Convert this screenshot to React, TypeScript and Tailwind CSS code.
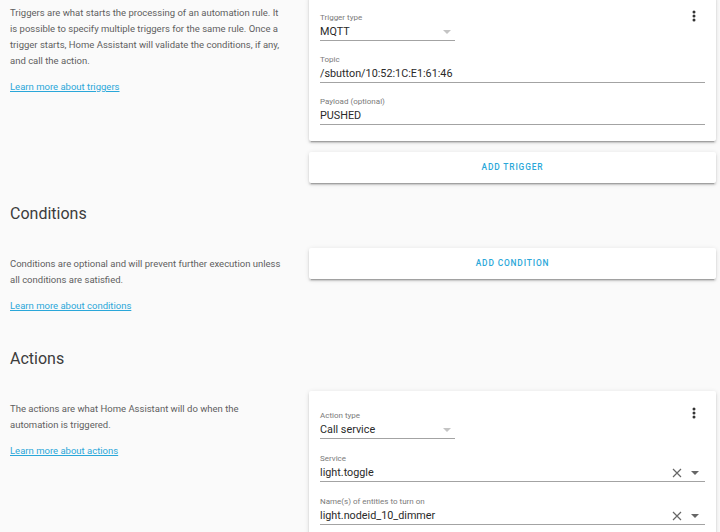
import React from "react";

const cardShadow =
  "shadow-[0_2px_2px_0_rgba(0,0,0,0.14),0_1px_5px_0_rgba(0,0,0,0.12),0_3px_1px_-2px_rgba(0,0,0,0.2)]";

function Dots({ className }: { className: string }) {
  return (
    <svg width="4" height="12" viewBox="0 0 4 12" className={"absolute right-[20px] " + className}>
      <circle cx="2" cy="2" r="1.5" fill="#333" />
      <circle cx="2" cy="6" r="1.5" fill="#333" />
      <circle cx="2" cy="10" r="1.5" fill="#333" />
    </svg>
  );
}

function Caret({ color }: { color: string }) {
  return (
    <svg width="8" height="4" viewBox="0 0 8 4">
      <path d="M0 0 L8 0 L4 4 Z" fill={color} />
    </svg>
  );
}

function Clear() {
  return (
    <svg width="10" height="10" viewBox="0 0 10 10">
      <path d="M1 1 L9 9 M9 1 L1 9" stroke="#666" strokeWidth="1.2" />
    </svg>
  );
}

function Field({
  label,
  value,
  select,
  combo,
  className = "",
}: {
  label: string;
  value: string;
  select?: boolean;
  combo?: boolean;
  className?: string;
}) {
  return (
    <div className={className}>
      <div className="text-[8px] leading-[12px] text-[#7a7a7a]">{label}</div>
      <div className="flex items-center h-[17px] border-b border-[#a3a3a3]">
        <span className="flex-1 text-[10.8px] leading-[16px] text-[#2a2a2a]">{value}</span>
        {select && (
          <span className="mr-[4px]">
            <Caret color="#c4c4c4" />
          </span>
        )}
        {combo && (
          <span className="flex items-center gap-[9px] mr-[6px]">
            <Clear />
            <Caret color="#666" />
          </span>
        )}
      </div>
    </div>
  );
}

function Help({ text, link, className = "" }: { text: React.ReactNode; link: string; className?: string }) {
  return (
    <div className={"w-[309px] shrink-0 pl-[10px] pr-[27px] " + className}>
      <p className="text-[9.5px] leading-[16px] text-[#5f5f5f]">{text}</p>
      <a className="block mt-[10px] text-[9.5px] leading-[16px] text-[#2aa7d9] underline">{link}</a>
    </div>
  );
}

function AddButton({ label }: { label: string }) {
  return (
    <div
      className={
        "h-[31px] rounded-[2px] bg-white flex items-center justify-center text-[8.4px] font-medium tracking-[0.1em] text-[#2aa7d9] " +
        cardShadow
      }
    >
      {label}
    </div>
  );
}

function Heading({ children, className = "" }: { children: React.ReactNode; className?: string }) {
  return <h2 className={"pl-[10px] text-[16px] leading-[24px] text-[#3c3c3c] " + className}>{children}</h2>;
}

export default function App() {
  return (
    <div className="h-[532px] overflow-hidden bg-[#fafafa] font-['Roboto',sans-serif]">
      {/* Triggers */}
      <div className="flex items-start">
        <Help
          className="pt-[5px]"
          text="Triggers are what starts the processing of an automation rule. It is possible to specify multiple triggers for the same rule. Once a trigger starts, Home Assistant will validate the conditions, if any, and call the action."
          link="Learn more about triggers"
        />
        <div className="w-[407px] -mt-[4px] flex flex-col gap-[11px]">
          <div className={"relative bg-white rounded-[2px] px-[11px] pt-[16px] pb-[16px] flex flex-col gap-[13px] " + cardShadow}>
            <Dots className="top-[14px]" />
            <Field label="Trigger type" value="MQTT" select className="w-[135px]" />
            <Field label="Topic" value="/sbutton/10:52:1C:E1:61:46" />
            <Field label="Payload (optional)" value="PUSHED" />
          </div>
          <AddButton label="ADD TRIGGER" />
        </div>
      </div>

      {/* Conditions */}
      <Heading className="mt-[19px]">Conditions</Heading>
      <div className="flex items-start mt-[22px]">
        <Help
          className="pt-[8px]"
          text="Conditions are optional and will prevent further execution unless all conditions are satisfied."
          link="Learn more about conditions"
        />
        <div className="w-[407px]">
          <AddButton label="ADD CONDITION" />
        </div>
      </div>

      {/* Actions */}
      <Heading className="mt-[33px]">Actions</Heading>
      <div className="flex items-start mt-[20px]">
        <Help
          className="pt-[10px]"
          text="The actions are what Home Assistant will do when the automation is triggered."
          link="Learn more about actions"
        />
        <div className={"relative w-[407px] bg-white rounded-[2px] px-[11px] pt-[19px] pb-[40px] flex flex-col gap-[14px] " + cardShadow}>
          <Dots className="top-[16px]" />
          <Field label="Action type" value="Call service" select className="w-[135px]" />
          <Field label="Service" value="light.toggle" combo />
          <Field label="Name(s) of entities to turn on" value="light.nodeid_10_dimmer" combo />
        </div>
      </div>
    </div>
  );
}
